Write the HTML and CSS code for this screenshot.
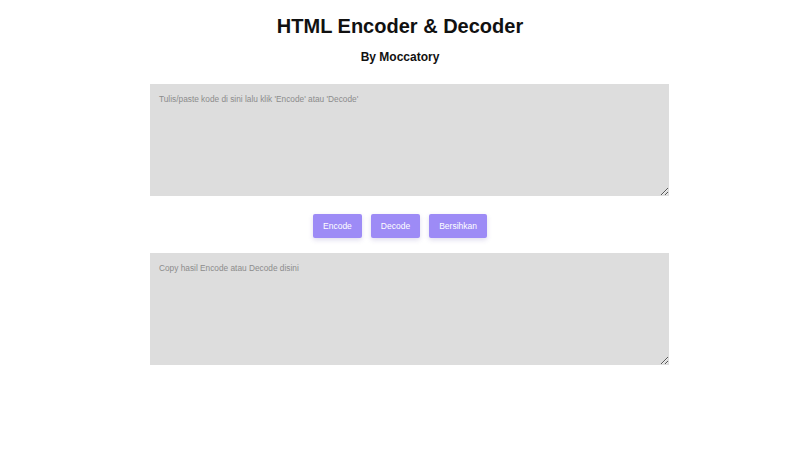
FILE: index.html
```html
<!DOCTYPE html>
<html lang="id">
<head>
<meta charset="utf-8">
<title>HTML Encoder &amp; Decoder</title>
<link rel="stylesheet" href="styles.css">
</head>
<body>
<main class="page">
  <h1 class="title">HTML Encoder &amp; Decoder</h1>
  <h2 class="subtitle">By Moccatory</h2>
  <section class="panel">
    <textarea class="box box-input" placeholder="Tulis/paste kode di sini lalu klik 'Encode' atau 'Decode'"></textarea>
    <div class="actions">
      <button class="btn" type="button">Encode</button>
      <button class="btn" type="button">Decode</button>
      <button class="btn" type="button">Bersihkan</button>
    </div>
    <textarea class="box box-output" placeholder="Copy hasil Encode atau Decode disini"></textarea>
  </section>
</main>
</body>
</html>
```
FILE: styles.css
```css
html, body {
  margin: 0;
  padding: 0;
  background: #ffffff;
}
body {
  font-family: "Liberation Sans", Arial, sans-serif;
  color: #111;
}
.page {
  display: flex;
  flex-direction: column;
  align-items: center;
}
.title {
  margin: 14px 0 0;
  font-size: 20px;
  line-height: 24px;
  font-weight: 700;
}
.subtitle {
  margin: 12px 0 0;
  font-size: 12px;
  line-height: 15px;
  font-weight: 700;
}
.panel {
  width: 500px;
  display: flex;
  flex-direction: column;
  align-items: flex-start;
}
.box {
  box-sizing: content-box;
  width: 100%;
  height: 92px;
  margin: 0;
  padding: 10px 10px 10px 9px;
  border: none;
  outline: none;
  background: #dddddd;
  font-family: "Liberation Sans", Arial, sans-serif;
  font-size: 8.3px;
  line-height: 10px;
  color: #333;
}
.box::placeholder {
  color: #8c8c8c;
}
.box-input {
  margin-top: 19px;
}
.actions {
  align-self: center;
  display: flex;
  gap: 9px;
  margin: 18px 0 15px;
}
.btn {
  box-sizing: border-box;
  height: 24px;
  padding: 0 10px;
  border: none;
  border-radius: 2px;
  background: #9d8bf6;
  color: #fff;
  font-family: "Liberation Sans", Arial, sans-serif;
  font-size: 8.5px;
  box-shadow: 0 2px 5px rgba(80, 60, 160, 0.18);
}
```
